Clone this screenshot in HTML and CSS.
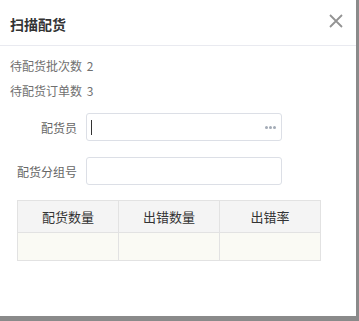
FILE: index.html
```html
<!DOCTYPE html>
<html lang="zh">
  <head>
    <meta charset="UTF-8" />
    <title>扫描配货</title>
    <link rel="stylesheet" href="styles.css">
  </head>
  <body>
    <div class="dialog">
      <!-- 标题栏 -->
      <div class="dialog-header">
        <span class="dialog-title">扫描配货</span>
        <svg class="close" width="14" height="14" viewBox="0 0 14 14">
          <path d="M1 1 L13 13 M13 1 L1 13" stroke="#939393" stroke-width="1.8" fill="none" />
        </svg>
      </div>

      <div class="dialog-body">
        <div class="stat">待配货批次数 <span>2</span></div>
        <div class="stat">待配货订单数 <span>3</span></div>

        <div class="form-row">
          <label>配货员</label>
          <div class="input">
            <span class="cursor"></span>
            <span class="dots"><i></i><i></i><i></i></span>
          </div>
        </div>
        <div class="form-row">
          <label>配货分组号</label>
          <div class="input"></div>
        </div>

        <table class="result">
          <thead>
            <tr>
              <th>配货数量</th>
              <th>出错数量</th>
              <th>出错率</th>
            </tr>
          </thead>
          <tbody>
            <tr>
              <td></td>
              <td></td>
              <td></td>
            </tr>
          </tbody>
        </table>
      </div>
    </div>
  </body>
</html>
```

FILE: styles.css
```css
body {
  margin: 0;
  background-color: #8a8a8a;
  font-family: "Noto Sans CJK SC", "Noto Sans", sans-serif;
  color: #666;
}

.dialog {
  width: 356px;
  height: 316px;
  background-color: #fff;
}

/* 标题栏 */
.dialog-header {
  height: 45px;
  border-bottom: 1px solid #e9eaf0;
  padding: 0 13px 0 10px;
  display: flex;
  align-items: center;
  justify-content: space-between;
}

.dialog-title {
  font-size: 14px;
  font-weight: 700;
  color: #333;
  margin-top: 2px;
}

.close {
  margin-top: -4px;
}

.dialog-body {
  padding: 7px 0 0 10px;
}

.stat {
  font-size: 12px;
  line-height: 25px;
  color: #707070;
}

.stat span {
  margin-left: 2px;
}

/* 表单 */
.form-row {
  display: flex;
  align-items: center;
  margin-top: 10px;
}

.form-row + .form-row {
  margin-top: 16px;
}

.form-row label {
  width: 67px;
  text-align: right;
  font-size: 12px;
  color: #666;
  margin-right: 9px;
}

.input {
  width: 185px;
  height: 26px;
  border: 1px solid #dcdfe6;
  border-radius: 3px;
  display: flex;
  align-items: center;
  justify-content: space-between;
  padding: 0 5px 0 4px;
}

.cursor {
  width: 1px;
  height: 15px;
  background-color: #333;
}

.dots {
  display: flex;
  gap: 1px;
}

.dots i {
  width: 3px;
  height: 3px;
  border-radius: 50%;
  background-color: #a3abb6;
}

/* 结果表格 */
.result {
  margin: 15px 0 0 7px;
  width: 304px;
  border-collapse: collapse;
  table-layout: fixed;
}

.result th,
.result td {
  border: 1px solid #e2e2e2;
  padding: 0;
}

.result th {
  height: 31px;
  line-height: 20px;
  background-color: #f4f4f4;
  font-size: 13px;
  font-weight: 400;
  color: #333;
}

.result td {
  height: 27px;
  background-color: #fafaf4;
}
```
